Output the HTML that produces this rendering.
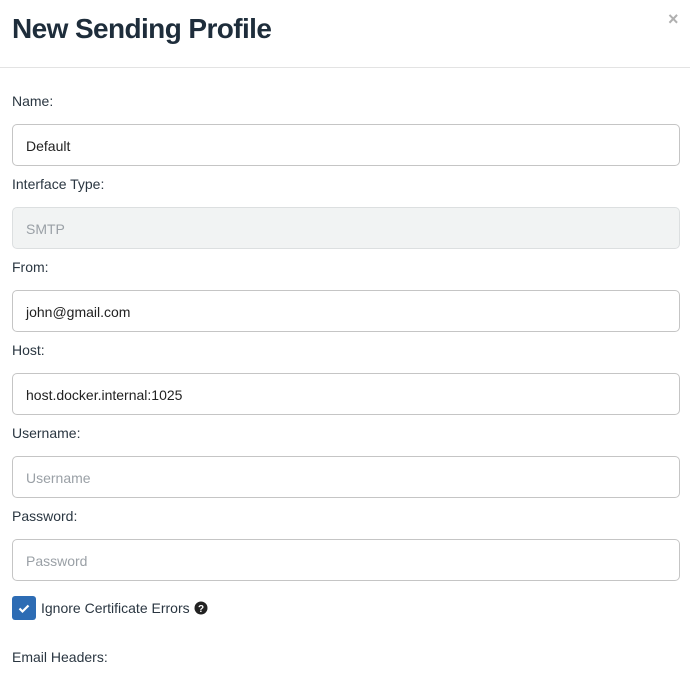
<!DOCTYPE html>
<html><head><style>
body{margin:0;width:690px;height:673px;overflow:hidden;background:#fff;font-family:"Liberation Sans",sans-serif;color:#283541}
h1{position:absolute;left:12px;top:13px;margin:0;font-size:28px;font-weight:bold;color:#1e2d3b;letter-spacing:-0.6px}
.x{position:absolute;left:668px;top:9px;font-size:18px;color:#b0b0b0;font-weight:bold}
.hr{position:absolute;left:0;top:67px;width:690px;height:1px;background:#e3e3e3}
.l{position:absolute;left:12px;font-size:14px;color:#2a3641}
.i{position:absolute;box-sizing:border-box;left:12px;width:668px;height:42px;border:1px solid #c5c5c5;border-radius:5px;font-size:14px;line-height:42px;padding-left:13px;color:#222}
.ph{color:#9aa0a6}
.dis{background:#f1f3f3;border-color:#dcdfe0;color:#9aa0a6}
.cb{position:absolute;left:12px;top:596px;width:24px;height:24px;background:#2d6cb4;border-radius:3px}
</style></head><body>
<h1>New Sending Profile</h1><div class="x">×</div><div class="hr"></div>
<div class="l" style="top:93px">Name:</div><div class="i" style="top:124px">Default</div>
<div class="l" style="top:176px">Interface Type:</div><div class="i dis" style="top:207px">SMTP</div>
<div class="l" style="top:259px">From:</div><div class="i" style="top:290px">john@gmail.com</div>
<div class="l" style="top:342px">Host:</div><div class="i" style="top:373px">host.docker.internal:1025</div>
<div class="l" style="top:425px">Username:</div><div class="i ph" style="top:456px">Username</div>
<div class="l" style="top:508px">Password:</div><div class="i ph" style="top:539px">Password</div>
<div class="cb"><svg width="24" height="24"><path d="M7.5 12.5l3 3 6-6" stroke="#fff" stroke-width="2.2" fill="none"/></svg></div>
<div class="l" style="top:600px;left:41px">Ignore Certificate Errors <svg width="14" height="14" style="vertical-align:-2px" viewBox="0 0 14 14"><circle cx="7" cy="7" r="6.5" fill="#222"/><text x="7" y="11" font-size="10" font-weight="bold" fill="#fff" text-anchor="middle" font-family="Liberation Sans">?</text></svg></div>
<div class="l" style="top:649px">Email Headers:</div>
</body></html>
